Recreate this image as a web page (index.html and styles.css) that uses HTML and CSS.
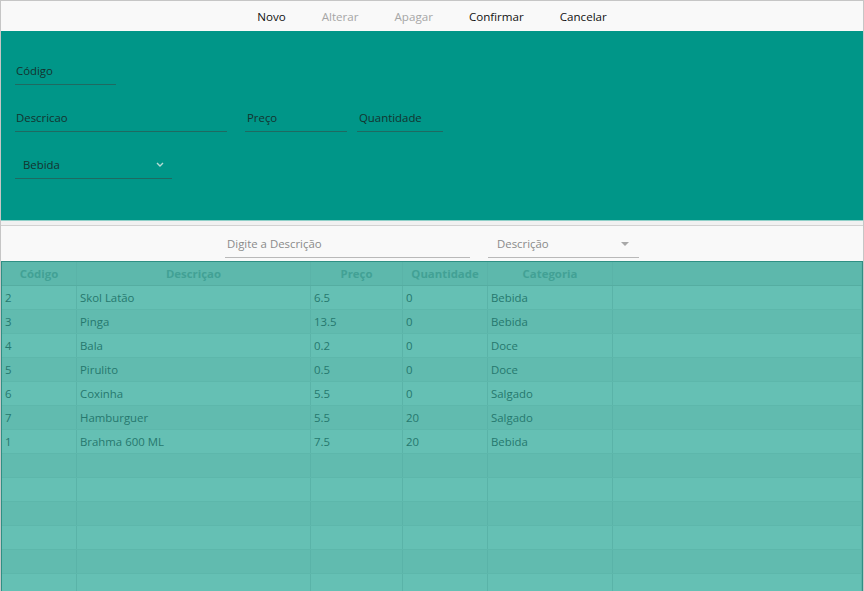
FILE: index.html
```html
<!DOCTYPE html>
<html>
<head>
<meta charset="utf-8">
<link rel="stylesheet" href="styles.css">
</head>
<body>
<div class="app">
  <div class="toolbar">
    <span class="btn">Novo</span>
    <span class="btn disabled">Alterar</span>
    <span class="btn disabled">Apagar</span>
    <span class="btn">Confirmar</span>
    <span class="btn">Cancelar</span>
  </div>
  <div class="form">
    <div class="row">
      <div class="field f-codigo">Código</div>
    </div>
    <div class="row">
      <div class="field f-desc">Descricao</div>
      <div class="field f-preco">Preço</div>
      <div class="field f-qtd">Quantidade</div>
    </div>
    <div class="row">
      <div class="field combo f-cat">
        <span>Bebida</span>
        <svg class="chev" width="8" height="5" viewBox="0 0 8 5"><path d="M1 1 L4 4 L7 1" fill="none" stroke="#b8dcd6" stroke-width="1.4"/></svg>
      </div>
    </div>
  </div>
  <div class="sep"></div>
  <div class="search">
    <div class="sfield s-text">Digite a Descrição</div>
    <div class="sfield s-combo">
      <span>Descrição</span>
      <svg class="tri" width="8" height="4" viewBox="0 0 8 4"><path d="M0 0 L8 0 L4 4 Z" fill="#a8a8a8"/></svg>
    </div>
  </div>
  <div class="table">
    <div class="tr head">
      <div class="td">Código</div><div class="td">Descriçao</div><div class="td">Preço</div><div class="td">Quantidade</div><div class="td">Categoria</div><div class="td"></div>
    </div>
    <div class="tr"><div class="td">2</div><div class="td">Skol Latão</div><div class="td">6.5</div><div class="td">0</div><div class="td">Bebida</div><div class="td"></div></div>
    <div class="tr"><div class="td">3</div><div class="td">Pinga</div><div class="td">13.5</div><div class="td">0</div><div class="td">Bebida</div><div class="td"></div></div>
    <div class="tr"><div class="td">4</div><div class="td">Bala</div><div class="td">0.2</div><div class="td">0</div><div class="td">Doce</div><div class="td"></div></div>
    <div class="tr"><div class="td">5</div><div class="td">Pirulito</div><div class="td">0.5</div><div class="td">0</div><div class="td">Doce</div><div class="td"></div></div>
    <div class="tr"><div class="td">6</div><div class="td">Coxinha</div><div class="td">5.5</div><div class="td">0</div><div class="td">Salgado</div><div class="td"></div></div>
    <div class="tr"><div class="td">7</div><div class="td">Hamburguer</div><div class="td">5.5</div><div class="td">20</div><div class="td">Salgado</div><div class="td"></div></div>
    <div class="tr"><div class="td">1</div><div class="td">Brahma 600 ML</div><div class="td">7.5</div><div class="td">20</div><div class="td">Bebida</div><div class="td"></div></div>
    <div class="tr"><div class="td"></div><div class="td"></div><div class="td"></div><div class="td"></div><div class="td"></div><div class="td"></div></div>
    <div class="tr"><div class="td"></div><div class="td"></div><div class="td"></div><div class="td"></div><div class="td"></div><div class="td"></div></div>
    <div class="tr"><div class="td"></div><div class="td"></div><div class="td"></div><div class="td"></div><div class="td"></div><div class="td"></div></div>
    <div class="tr"><div class="td"></div><div class="td"></div><div class="td"></div><div class="td"></div><div class="td"></div><div class="td"></div></div>
    <div class="tr"><div class="td"></div><div class="td"></div><div class="td"></div><div class="td"></div><div class="td"></div><div class="td"></div></div>
    <div class="tr"><div class="td"></div><div class="td"></div><div class="td"></div><div class="td"></div><div class="td"></div><div class="td"></div></div>
  </div>
</div>
</body>
</html>
```
FILE: styles.css
```css
* { box-sizing: border-box; }
html, body { margin: 0; padding: 0; background: #ffffff; }
body {
  font-family: "Open Sans", "Noto Sans", sans-serif;
  font-size: 11.4px;
  color: #1a1a1a;
}
.app {
  width: 864px;
  height: 591px;
  border: 1px solid #c6c6c6;
  border-bottom: none;
  overflow: hidden;
  display: flex;
  flex-direction: column;
  background: #f9f9f9;
}
.toolbar {
  height: 30px;
  display: flex;
  justify-content: center;
  align-items: center;
  gap: 36px;
  background: #f9f9f9;
}
.btn { color: #111; font-size: 11.6px; }
.btn.disabled { color: #a6a6a6; }

.form {
  background: #009688;
  height: 189px;
  padding: 29px 0 0 14px;
  display: flex;
  flex-direction: column;
  gap: 22px;
}
.row { display: flex; }
.field {
  height: 25px;
  border-bottom: 1px solid #1f6a61;
  display: flex;
  align-items: center;
  padding-left: 1px;
  padding-bottom: 3px;
  color: #14332f;
}
.f-codigo { width: 101px; }
.f-desc { width: 212px; }
.f-preco { width: 102px; margin-left: 18px; padding-left: 2px; }
.f-qtd { width: 86px; margin-left: 10px; padding-left: 2px; }
.f-cat { width: 157px; padding-left: 8px; justify-content: space-between; padding-right: 8px; }
.chev { display: block; }

.sep {
  height: 6px;
  background: #f1f1f1;
  border-top: 1px solid #8fd0c8;
  border-bottom: 1px solid #d2d2d2;
}
.search {
  height: 35px;
  display: flex;
  padding-left: 224px;
  background: #f9f9f9;
}
.sfield {
  height: 32px;
  border-bottom: 1px solid #b9b9b9;
  display: flex;
  align-items: center;
  padding-top: 4px;
  color: #8a8a8a;
}
.s-text { width: 245px; padding-left: 2px; }
.s-combo { width: 151px; margin-left: 18px; padding-left: 9px; padding-right: 10px; justify-content: space-between; }
.tri { display: block; }

.table {
  flex: 1;
  border: 1px solid #2f8f84;
  border-bottom: none;
  background: #64bfb3;
  overflow: hidden;
}
.tr {
  display: grid;
  grid-template-columns: 75px 234px 92px 85px 125px 1fr;
  height: 24px;
  background: #65c0b4;
  border-bottom: 1px solid #5db7ab;
}
.tr:nth-child(odd) { background: #61bbaf; }
.td {
  border-right: 1px solid #5ab3a8;
  padding-left: 3px;
  display: flex;
  align-items: center;
  color: #26786e;
  white-space: nowrap;
  overflow: hidden;
}
.tr.head {
  background: #5db8ac;
  border-bottom: 1px solid #55ada1;
}
.tr.head .td {
  justify-content: center;
  padding-left: 0;
  font-weight: bold;
  color: #42a195;
}
```
